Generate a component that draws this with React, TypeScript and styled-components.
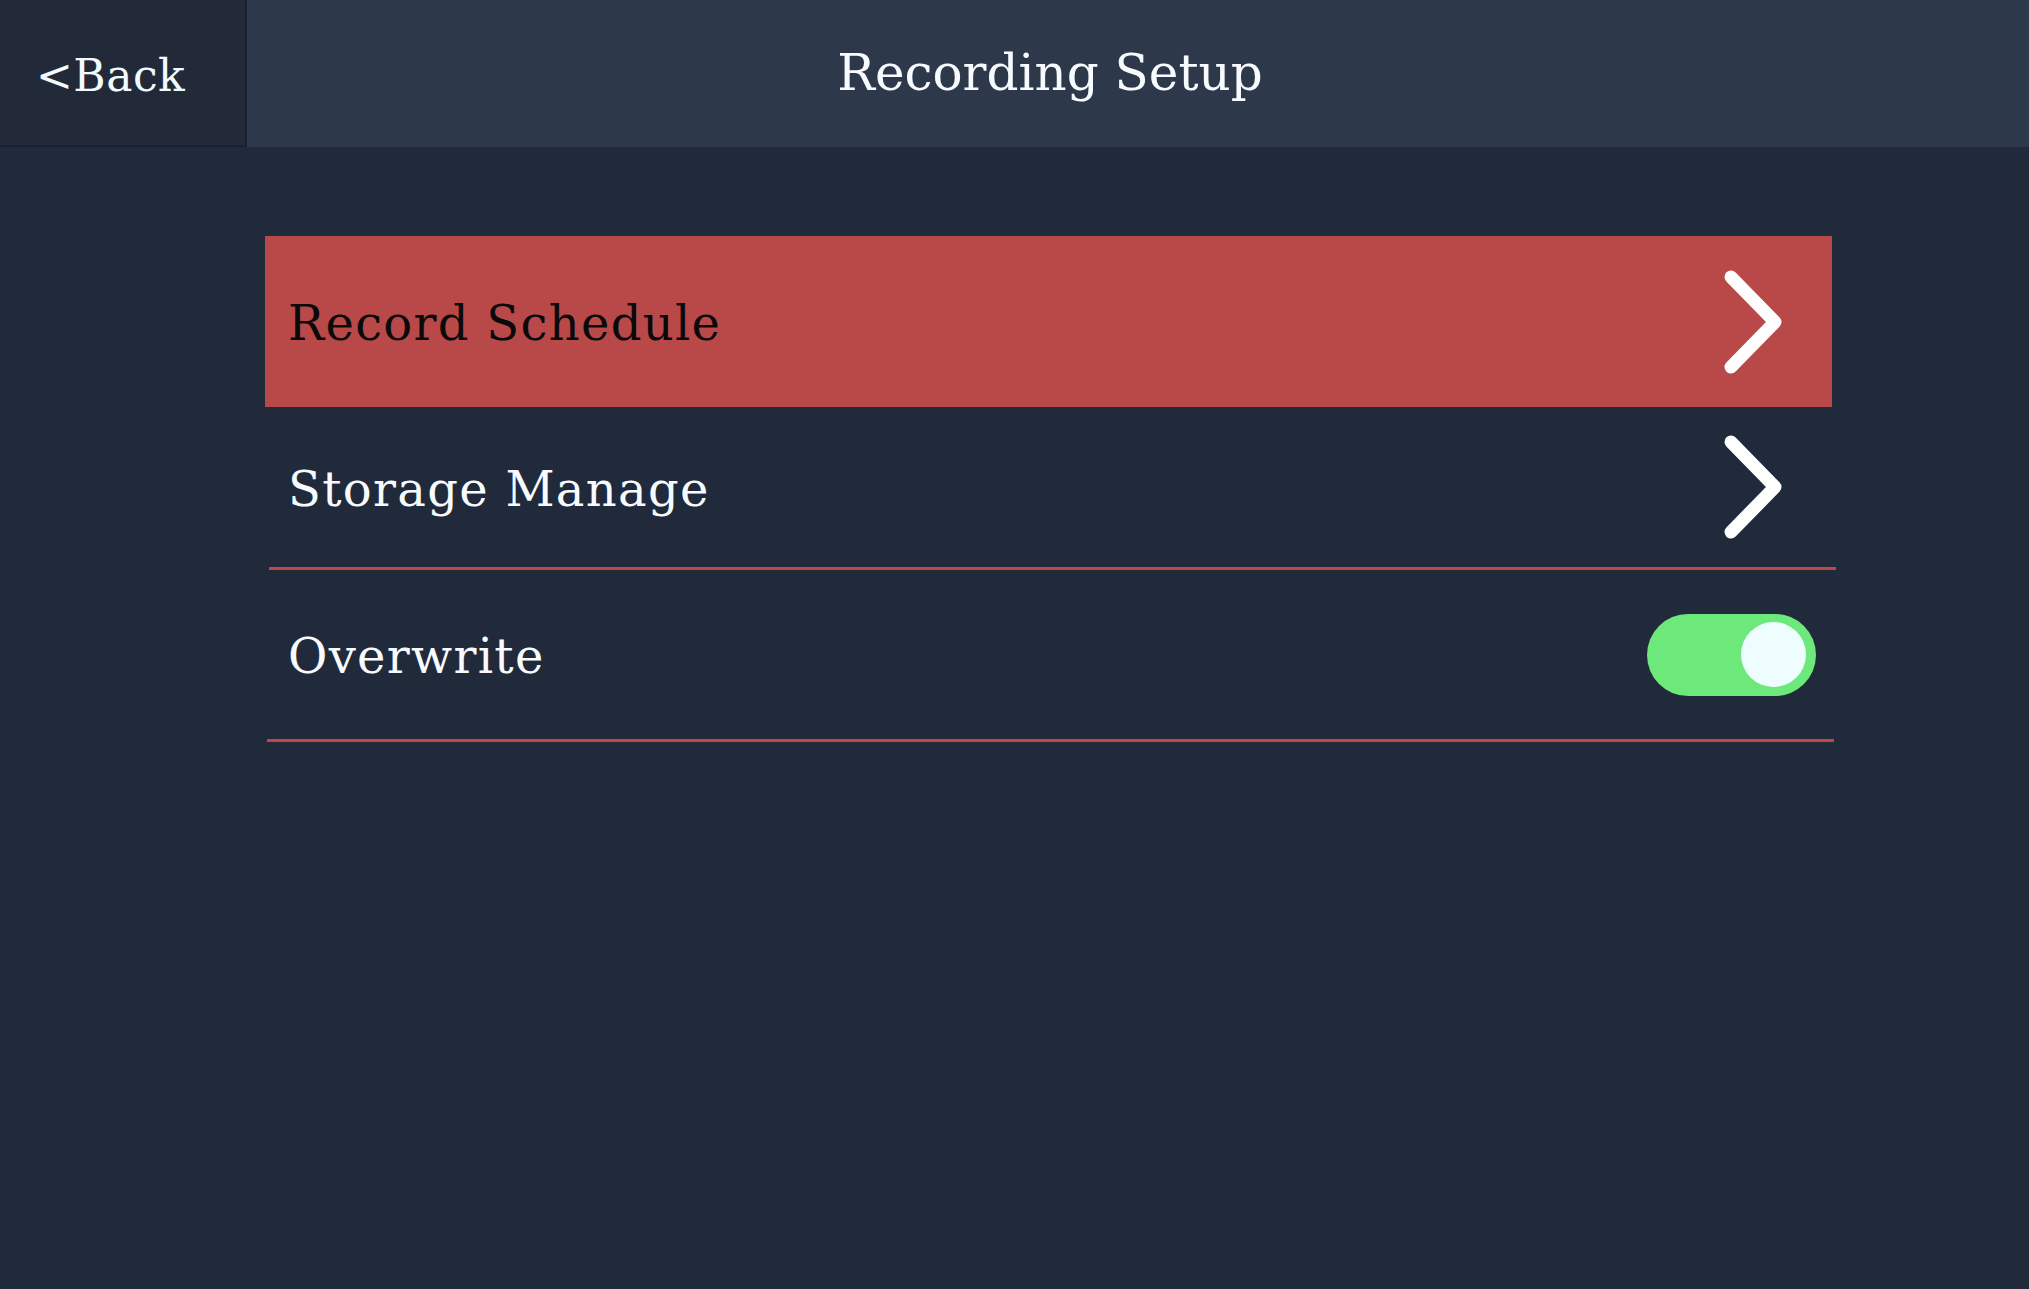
import React, { useState } from 'react'
import styled, { createGlobalStyle } from 'styled-components'

const GlobalStyle = createGlobalStyle`
  html, body {
    margin: 0;
    padding: 0;
    background: #212a3a;
  }
  body {
    font-family: "DejaVu Serif", "Liberation Serif", serif;
  }
`

const Page = styled.div`
  width: 2029px;
  min-height: 1289px;
  background: #212a3a;
  display: flex;
  flex-direction: column;
`

const Header = styled.div`
  height: 147px;
  background: #2e384b;
  display: flex;
  align-items: stretch;
`

const BackButton = styled.button`
  width: 247px;
  background: #222a3a;
  border: none;
  border-right: 2px solid #1a2030;
  border-bottom: 2px solid #1a2030;
  box-sizing: border-box;
  color: #f2fbff;
  font-family: "DejaVu Serif", "Liberation Serif", serif;
  font-size: 44px;
  letter-spacing: 0.5px;
  text-align: left;
  padding: 6px 0 0 36px;
  cursor: pointer;
`

const Title = styled.div`
  flex: 1;
  display: flex;
  align-items: center;
  justify-content: center;
  color: #f7fbff;
  font-size: 50px;
  padding: 0 176px 2px 0;
`

const List = styled.div`
  margin: 89px 0 0 265px;
  width: 1567px;
  display: flex;
  flex-direction: column;
`

const Row = styled.div<{ active?: boolean; height: number; right: number }>`
  height: ${({ height }) => height}px;
  background: ${({ active }) => (active ? '#b94849' : 'transparent')};
  display: flex;
  align-items: center;
  justify-content: space-between;
  padding: 0 ${({ right }) => right}px 0 23px;
  box-sizing: border-box;
  cursor: pointer;
`

const Label = styled.span<{ active?: boolean }>`
  color: ${({ active }) => (active ? '#0a0a0a' : '#f7fbff')};
  font-size: 48px;
  letter-spacing: 1.3px;
  padding-top: 3px;
`

const Divider = styled.div<{ offset: number }>`
  height: 3px;
  background: #c0464a;
  margin-left: ${({ offset }) => offset}px;
  margin-right: ${({ offset }) => -offset}px;
`

const ChevronWrap = styled.div`
  width: 58px;
  height: 104px;
  display: flex;
`

const Toggle = styled.button<{ on: boolean }>`
  width: 169px;
  height: 82px;
  border-radius: 41px;
  border: none;
  background: ${({ on }) => (on ? '#6de87a' : '#4a5568')};
  display: flex;
  align-items: center;
  justify-content: ${({ on }) => (on ? 'flex-end' : 'flex-start')};
  padding: 0 10px;
  box-sizing: border-box;
  cursor: pointer;
`

const Knob = styled.span`
  width: 65px;
  height: 65px;
  border-radius: 50%;
  background: #eefdff;
`

function Chevron() {
  return (
    <ChevronWrap>
      <svg width="58" height="104" viewBox="0 0 58 104">
        <polyline
          points="7,7 51,52 7,97"
          fill="none"
          stroke="#ffffff"
          strokeWidth="13"
          strokeLinecap="round"
          strokeLinejoin="round"
        />
      </svg>
    </ChevronWrap>
  )
}

export default function App() {
  const [overwrite, setOverwrite] = useState(true)

  return (
    <Page>
      <GlobalStyle />
      <Header>
        <BackButton>&lt;Back</BackButton>
        <Title>Recording Setup</Title>
      </Header>

      <List>
        <Row active height={171} right={50}>
          <Label active>Record Schedule</Label>
          <Chevron />
        </Row>
        <Row height={160} right={50}>
          <Label>Storage Manage</Label>
          <Chevron />
        </Row>
        <Divider offset={4} />
        <Row height={169} right={16}>
          <Label>Overwrite</Label>
          <Toggle on={overwrite} onClick={() => setOverwrite(!overwrite)}>
            <Knob />
          </Toggle>
        </Row>
        <Divider offset={2} />
      </List>
    </Page>
  )
}
